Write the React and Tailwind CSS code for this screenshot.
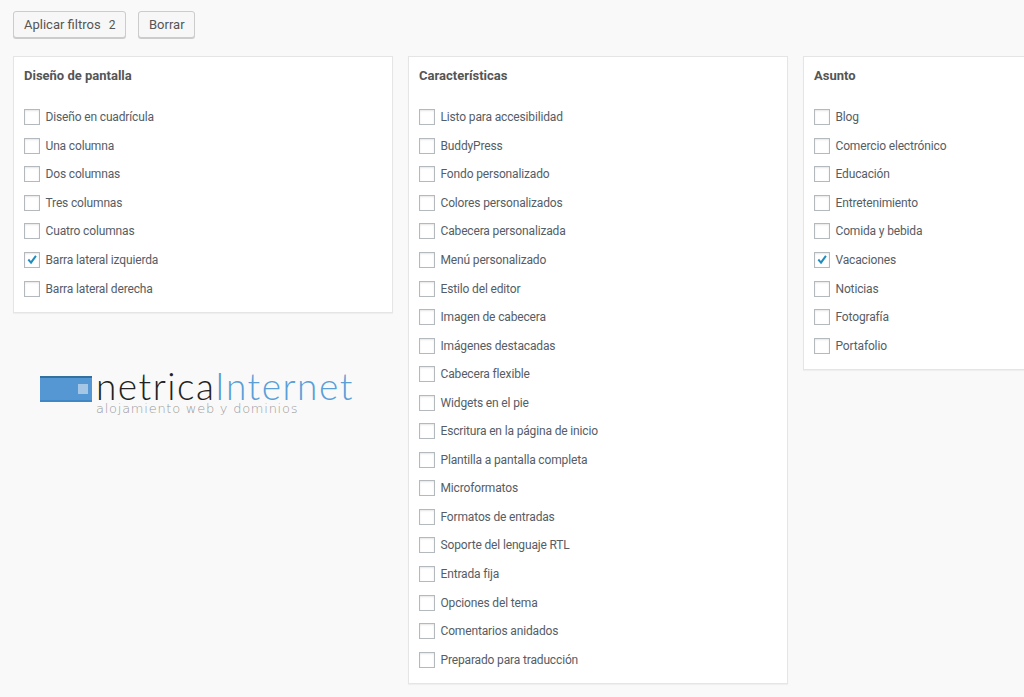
const layoutOptions = [
  { label: "Diseño en cuadrícula" },
  { label: "Una columna" },
  { label: "Dos columnas" },
  { label: "Tres columnas" },
  { label: "Cuatro columnas" },
  { label: "Barra lateral izquierda", checked: true },
  { label: "Barra lateral derecha" },
];

const featureOptions = [
  "Listo para accesibilidad",
  "BuddyPress",
  "Fondo personalizado",
  "Colores personalizados",
  "Cabecera personalizada",
  "Menú personalizado",
  "Estilo del editor",
  "Imagen de cabecera",
  "Imágenes destacadas",
  "Cabecera flexible",
  "Widgets en el pie",
  "Escritura en la página de inicio",
  "Plantilla a pantalla completa",
  "Microformatos",
  "Formatos de entradas",
  "Soporte del lenguaje RTL",
  "Entrada fija",
  "Opciones del tema",
  "Comentarios anidados",
  "Preparado para traducción",
].map((label) => ({ label }));

const subjectOptions = [
  { label: "Blog" },
  { label: "Comercio electrónico" },
  { label: "Educación" },
  { label: "Entretenimiento" },
  { label: "Comida y bebida" },
  { label: "Vacaciones", checked: true },
  { label: "Noticias" },
  { label: "Fotografía" },
  { label: "Portafolio" },
];

const buttonBase =
  "h-[27px] rounded-[3px] border border-[#cccccc] bg-[#f7f7f7] text-left text-[13px] leading-[26px] text-[#555555] shadow-[0_1px_0_#cccccc]";

function Checkbox({ checked }) {
  return (
    <span className="flex h-[16px] w-[16px] shrink-0 items-center justify-center border border-[#b4b9be] bg-white shadow-[inset_0_1px_2px_rgba(0,0,0,0.1)]">
      {checked && (
        <svg viewBox="0 0 16 16" className="h-[16px] w-[16px]">
          <path d="M3 8.2 L4.6 6.7 L6.7 9 L11.6 2.6 L13.4 3.9 L7 12.8 Z" fill="#1e8cbe" />
        </svg>
      )}
    </span>
  );
}

function FilterPanel({ title, options }) {
  return (
    <section className="w-[380px] shrink-0 border border-[#e5e5e5] bg-white px-[10px] pb-[9px] shadow-[0_1px_1px_rgba(0,0,0,0.04)]">
      <h4 className="mt-[11px] mb-[19px] h-[16px] text-[13px] font-bold leading-[16px] text-[#555555]">
        {title}
      </h4>
      <div>
        {options.map((option) => (
          <label key={option.label} className="flex h-[28.55px] items-center gap-[5.5px]">
            <Checkbox checked={option.checked} />
            <span className="text-[12px] tracking-[-0.15px] text-[#555d66]">{option.label}</span>
          </label>
        ))}
      </div>
    </section>
  );
}

function NetricaLogo() {
  return (
    <div className="mt-[57px] ml-[27px] flex items-start">
      <div className="mt-[6px] flex h-[26px] w-[52px] items-center justify-end border-t-2 border-b-2 border-t-[#33709f] border-b-[#3f88c5] bg-[#5497d2] pr-[4px]">
        <span className="h-[10px] w-[10px] bg-[#a5c6e4]" />
      </div>
      <div className="ml-[4px] flex flex-col">
        <p className="font-['Lato'] text-[37px] font-light leading-[31px] tracking-[1.5px] text-[#222222]">
          netrica<span className="text-[#5a9fd8]">Internet</span>
        </p>
        <p className="font-['DejaVu_Sans'] text-[13px] font-light leading-[15px] tracking-[0.75px] text-[#999999]">
          alojamiento web y dominios
        </p>
      </div>
    </div>
  );
}

export default function App() {
  return (
    <div className="h-[697px] w-[1024px] overflow-hidden bg-[#f9f9f9] font-['Roboto',sans-serif]">
      <div className="flex gap-[12px] pt-[11px] pl-[13px]">
        <button className={`${buttonBase} w-[113px] pl-[10px]`}>
          Aplicar filtros <span className="ml-[5px] text-[12px]">2</span>
        </button>
        <button className={`${buttonBase} w-[57px] pl-[10px]`}>Borrar</button>
      </div>
      <div className="mt-[18px] flex items-start gap-[15px] pl-[13px]">
        <div className="w-[380px] shrink-0">
          <FilterPanel title="Diseño de pantalla" options={layoutOptions} />
          <NetricaLogo />
        </div>
        <FilterPanel title="Características" options={featureOptions} />
        <FilterPanel title="Asunto" options={subjectOptions} />
      </div>
    </div>
  );
}
